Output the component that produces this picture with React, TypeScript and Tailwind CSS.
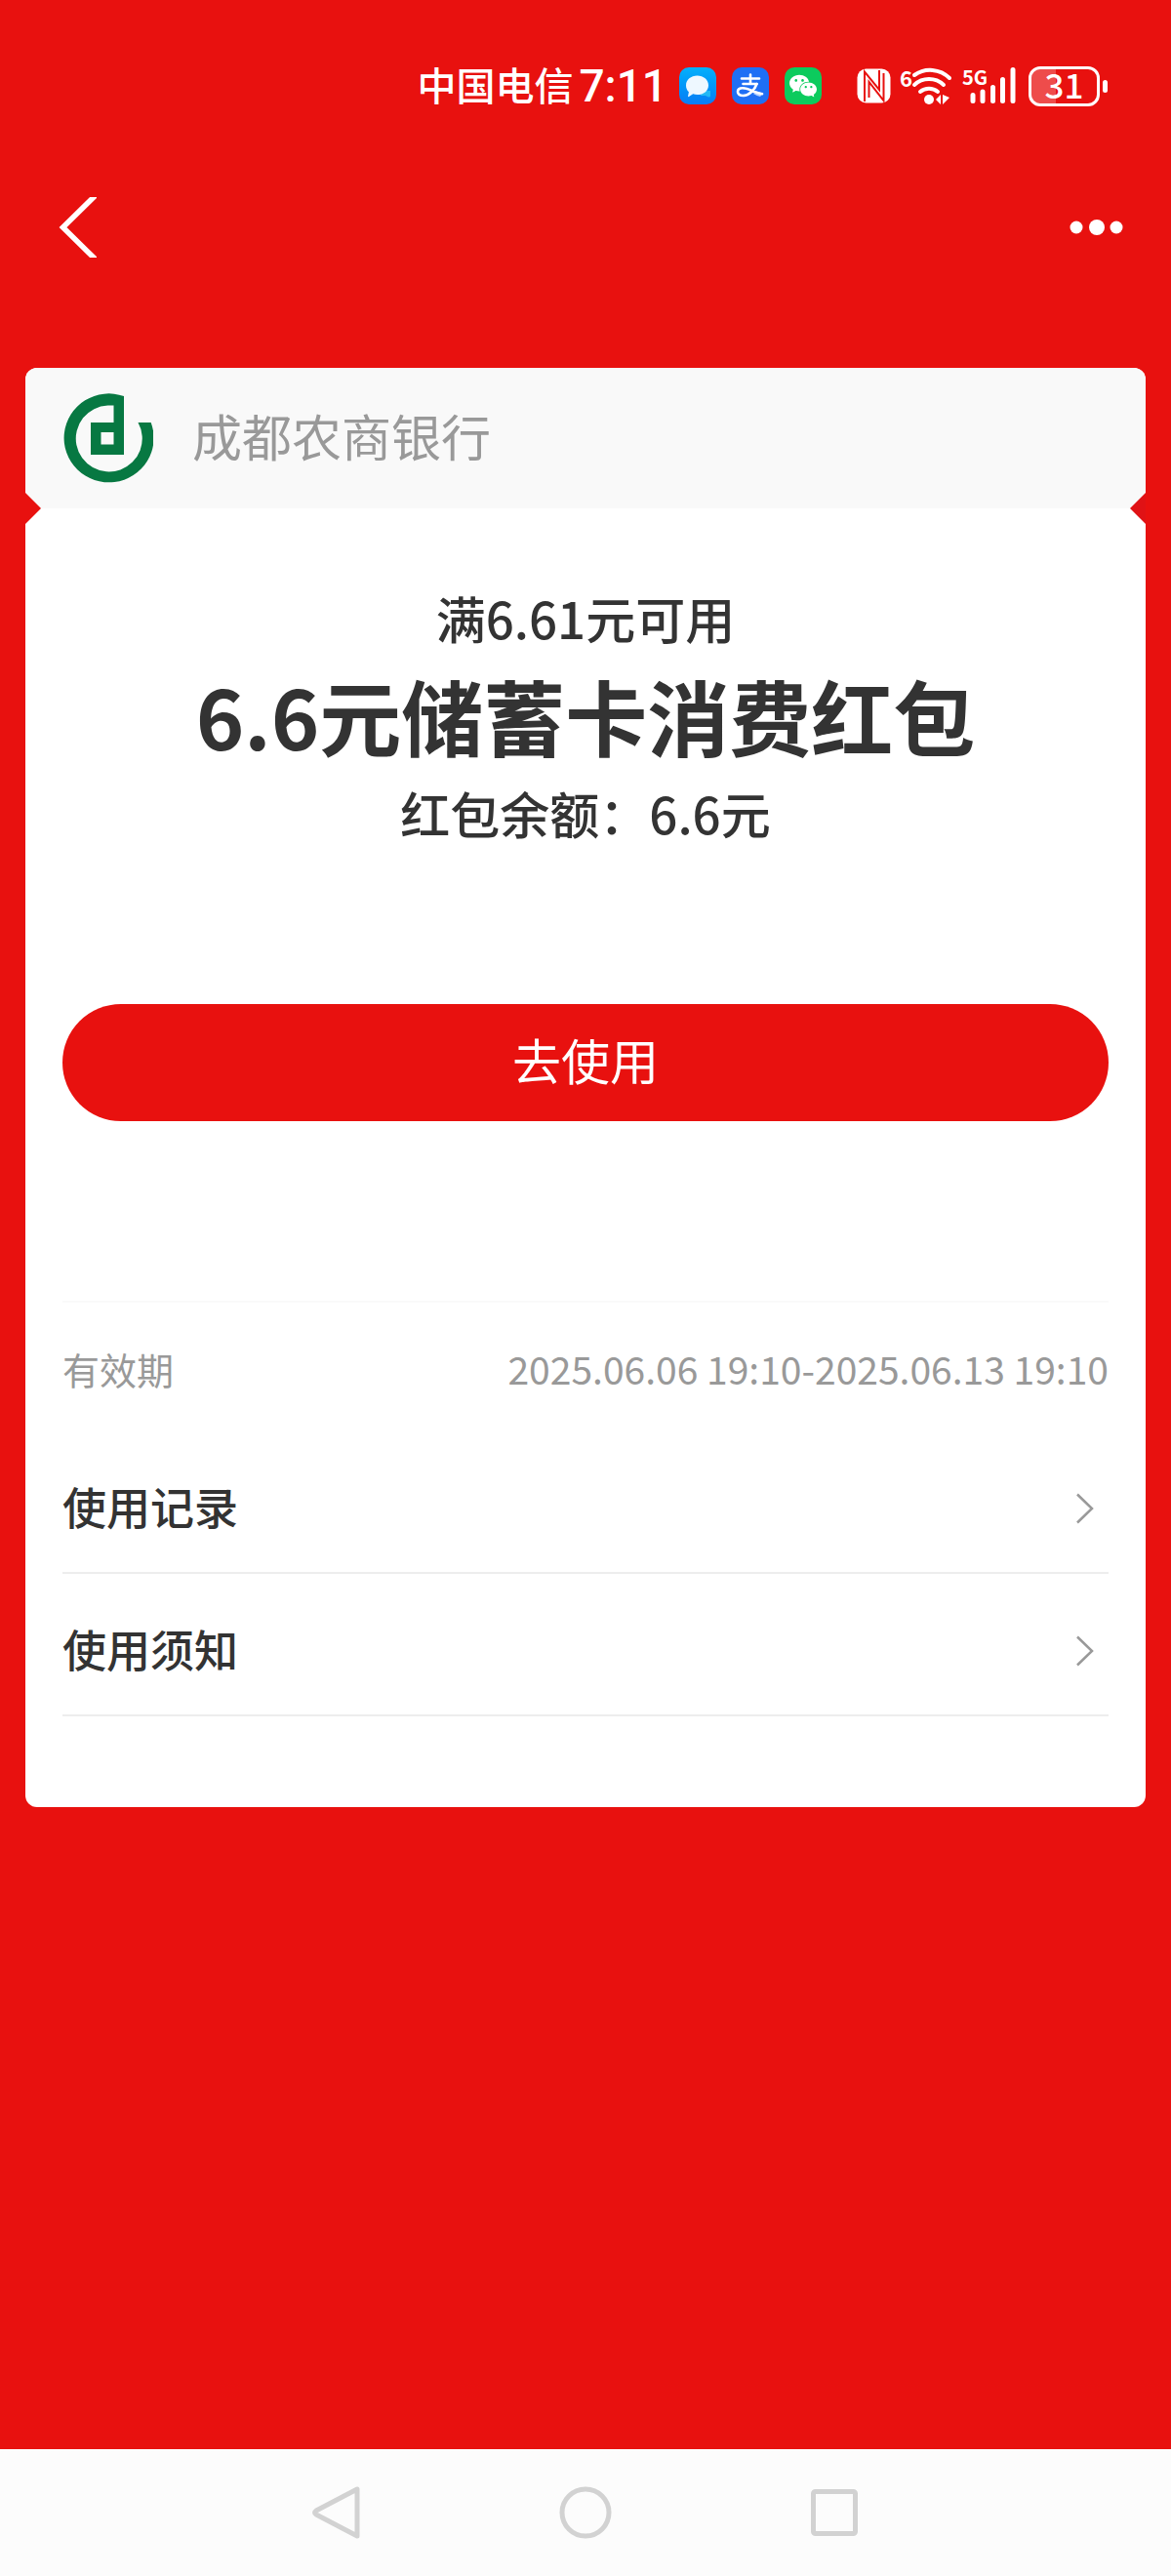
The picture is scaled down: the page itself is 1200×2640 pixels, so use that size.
import type { ReactNode } from "react";
import { AiFillWechat } from "react-icons/ai";

const RECORDS = [
  { label: "使用记录", href: "#records" },
  { label: "使用须知", href: "#notice" },
];

function AppBadge({ className, children }: { className: string; children: ReactNode }) {
  return <span className={`flex size-[38px] items-center justify-center rounded-[10px] ${className}`}>{children}</span>;
}

function ChatIcon() {
  return (
    <svg width={28} height={28} viewBox="0 0 28 28">
      <path d="M18 19h9v5q0 2-2 1.500l-3-1.500h-5z" fill="#22b8f5" />
      <path d="M13.500 3.500c6.400 0 11.500 4.300 11.500 9.900s-5 9.600-11.500 9.600c-1.600 0-3-.2-4.300-.7L5 25c-.7.400-1.200 0-.9-.8l.8-4C3 18.500 2 16 2 13.400c0-5.600 5.100-9.900 11.500-9.900z" fill="#eef8ff" />
    </svg>
  );
}

function AlipayIcon() {
  return (
    <svg width={32} height={32} viewBox="0 0 32 32" fill="none" stroke="white" strokeLinecap="round">
      <path d="M7 8.500h18M16 4.500V14M8.500 14h14" strokeWidth={2.600} />
      <path d="M22.500 14c-2 6-8 12-14 12-3.500 0-5.500-1.700-5.500-4s2-3.800 5-3.800c6 0 12 4.800 20 6" strokeWidth={2.600} />
      <path d="M21 21.500l8 2-3 3.500q-3-.5-7-3z" fill="white" stroke="none" opacity={0.7} />
    </svg>
  );
}

function NfcIcon() {
  return (
    <svg width={36} height={36} viewBox="0 0 36 36" aria-label="NFC">
      <rect x="0.500" y="0.500" width="34" height="35" rx="9" fill="white" />
      <path d="M8 34V3.500L23 22V2" fill="none" stroke="#e8110f" strokeWidth={2} />
      <path d="M12.500 30V14L27.500 33V5" fill="none" stroke="#e8110f" strokeWidth={2} />
    </svg>
  );
}

function WifiIcon() {
  return (
    <div className="flex items-start">
      <span className="h-[42px] w-3 text-[22px] leading-[24px] font-bold">6</span>
      <svg width={44} height={42} viewBox="12 0 44 42" fill="none" stroke="white" aria-label="Wi-Fi">
        <path d="M15 10a28 28 0 0 1 36 3" strokeWidth={4} strokeLinecap="round" />
        <path d="M15 20a22 22 0 0 1 30 0" strokeWidth={4} strokeLinecap="round" />
        <path d="M21 27a14 14 0 0 1 18 0" strokeWidth={4} strokeLinecap="round" />
        <circle cx="30" cy="35" r="5" fill="white" stroke="none" />
        <path d="M37 35l5-5v10zM44 30l7 3-7 7z" fill="white" stroke="none" />
      </svg>
    </div>
  );
}

function SignalIcon() {
  return (
    <div className="relative">
      <svg width={56} height={42} viewBox="0 0 56 42" aria-hidden="true">
        <g stroke="white" strokeWidth={5} strokeLinecap="round">
          <path d="M11 30.500v6M21 27v9.500M31.500 22.500v14M41.500 14.500v22M52 4.500v32" />
        </g>
      </svg>
      <span className="absolute top-0 left-0 text-[20px] leading-[24px] font-bold">5G</span>
    </div>
  );
}

function Battery() {
  return (
    <div className="flex items-center gap-[3px]">
      <div className="relative flex h-[41px] w-[73px] items-center justify-center rounded-[12px] border-3 border-white">
        <span className="absolute inset-y-0 left-0 w-[38%] rounded-l-[9px] bg-white/25" />
        <span className="relative pb-1 text-[35px] leading-[34px] font-medium">31</span>
      </div>
      <span className="h-[13px] w-[5px] rounded-full bg-white" />
    </div>
  );
}

function StatusBar() {
  return (
    <div className="flex h-[112px] items-center justify-end pt-[64px] pr-[65px]">
      <span className="pb-1 text-[40px] leading-[40px] font-medium">中国电信</span>
      <span className="ml-1.5 font-[Roboto] text-[46px] leading-[46px] font-medium">7:11</span>
      <div className="ml-3 flex gap-4">
        <AppBadge className="bg-linear-to-b from-[#06b0fb] to-[#0b7cf5]"><ChatIcon /></AppBadge>
        <AppBadge className="bg-[#1f6ff5]"><AlipayIcon /></AppBadge>
        <AppBadge className="bg-[#0ccb5d]"><AiFillWechat size={32} /></AppBadge>
      </div>
      <div className="ml-9 flex items-center gap-2">
        <NfcIcon />
        <WifiIcon />
        <SignalIcon />
        <div className="ml-1"><Battery /></div>
      </div>
    </div>
  );
}

function BankLogo() {
  return (
    <svg width={93} height={92} viewBox="0 0 93 92" aria-hidden="true">
      <path
        fillRule="evenodd"
        fill="#077842"
        d="M63 3A46 45.500 0 1 0 90.700 30H77.500A34 34 0 1 1 46.500 12.500H52.500V30H29V63H63ZM39.500 40H52.500V52.500H39.500Z"
      />
    </svg>
  );
}

export default function App() {
  return (
    <div className="flex min-h-screen flex-col bg-[#e8110f] font-['Noto_Sans_CJK_SC',sans-serif] text-white">
      <StatusBar />

      <header className="flex items-center justify-between pt-[90px] pr-[48px] pb-[113px] pl-[60px]">
        <button aria-label="返回">
          <svg width={39} height={62} viewBox="0 0 39 62" fill="none" stroke="white" strokeWidth={5.500}>
            <path d="M38 -2L4.500 31L38 64" />
          </svg>
        </button>
        <button aria-label="更多">
          <svg width={56} height={18} viewBox="0 0 56 18" fill="white">
            <circle cx="7" cy="9" r="6.500" />
            <circle cx="28" cy="9" r="8" />
            <circle cx="48" cy="9" r="6.500" />
          </svg>
        </button>
      </header>

      <main className="relative mx-[26px] overflow-hidden rounded-[12px] bg-white text-[#333]">
        <div className="flex h-[144px] items-center gap-10 bg-[#f9f9f9] px-[38px]">
          <BankLogo />
          <h2 className="pb-1.5 text-[51px] leading-[60px] text-[#999]">成都农商银行</h2>
        </div>
        {/* ticket notches */}
        <span className="absolute top-[128px] left-0 h-8 w-4 bg-[#e8110f] [clip-path:polygon(0_0,100%_50%,0_100%)]" />
        <span className="absolute top-[128px] right-0 h-8 w-4 bg-[#e01215] [clip-path:polygon(100%_0,0_50%,100%_100%)]" />

        <div className="px-[38px] pb-[93px]">
          <div className="flex flex-col items-center gap-5 pt-[82px] font-medium">
            <p className="text-[51px] leading-[60px]">满6.61元可用</p>
            <h1 className="text-[84px] leading-[100px] font-bold">6.6元储蓄卡消费红包</h1>
            <p className="text-[51px] leading-[60px]">红包余额：6.6元</p>
          </div>

          <button className="mt-[166px] h-[120px] w-full rounded-full bg-[#e8110f] pb-2 text-[50px] leading-[60px] text-white">
            去使用
          </button>

          <div className="mt-[184px] flex h-[134px] items-center justify-between border-t-2 border-[#fafafa] pt-[2px] text-[#999]">
            <span className="text-[38px]">有效期</span>
            <span className="text-[39px]">2025.06.06 19:10-2025.06.13 19:10</span>
          </div>

          {RECORDS.map((r) => (
            <a
              key={r.label}
              href={r.href}
              className="flex h-[146px] items-center justify-between border-b-2 border-[#ededed] pt-[14px] pr-[14px] text-[45px] font-medium"
            >
              <span className="pb-1">{r.label}</span>
              <svg width={20} height={32} viewBox="0 0 20 32" fill="none" stroke="#999" strokeWidth={2.500}>
                <path d="M2 1.500L17 16L2 30.500" />
              </svg>
            </a>
          ))}
        </div>
      </main>

      <nav className="mt-auto bg-[#fcfcfc]">
        <div className="mx-auto grid h-[130px] max-w-[765px] grid-cols-3 place-items-center">
          <button aria-label="返回上一页">
            <svg width={54} height={54} viewBox="0 0 54 54" fill="none" stroke="#d2d2d2" strokeWidth={5} strokeLinejoin="round">
              <path d="M48 3V51L6 29Q3 27 6 25Z" />
            </svg>
          </button>
          <button aria-label="主屏幕">
            <svg width={54} height={54} viewBox="0 0 54 54" fill="none" stroke="#d2d2d2" strokeWidth={5}>
              <circle cx="27" cy="27" r="24" />
            </svg>
          </button>
          <button aria-label="最近任务">
            <svg width={54} height={54} viewBox="0 0 54 54" fill="none" stroke="#d2d2d2" strokeWidth={5}>
              <rect x="5.500" y="5.500" width="43" height="43" rx="2" />
            </svg>
          </button>
        </div>
      </nav>
    </div>
  );
}
